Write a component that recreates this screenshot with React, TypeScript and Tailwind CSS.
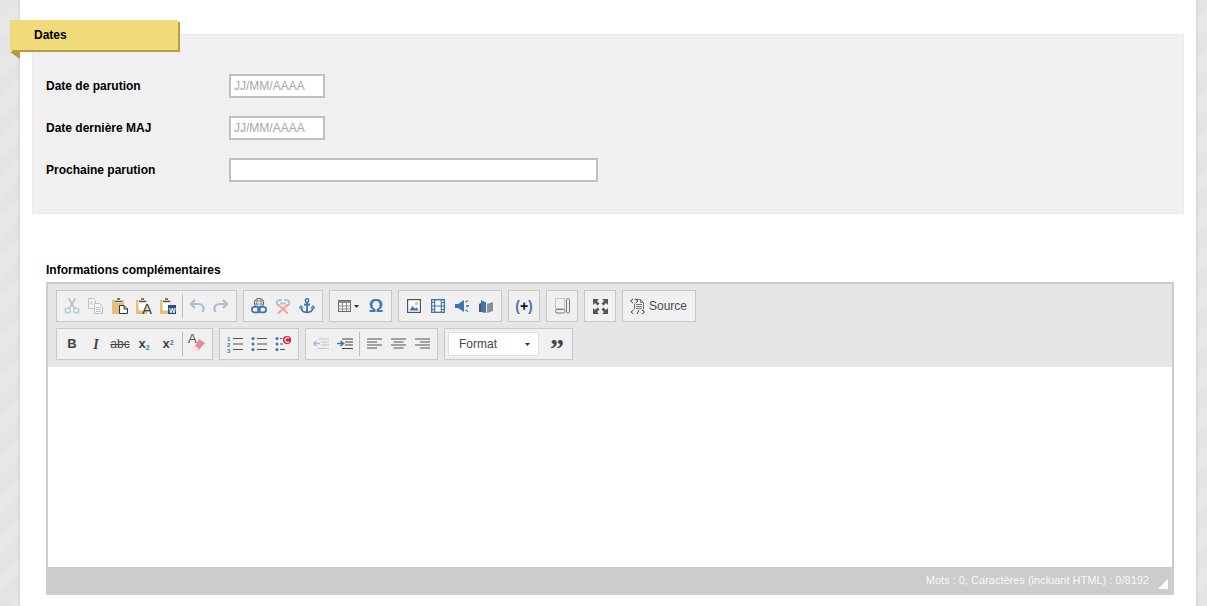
import type { ReactNode } from 'react';

const BLUE = '#3f75ab';

function Svg({ children, w = 16, h = 16 }: { children: ReactNode; w?: number; h?: number }) {
  return (
    <svg width={w} height={h} viewBox={`0 0 ${w} ${h}`} fill="none" className="block">
      {children}
    </svg>
  );
}

function Btn({ children, disabled = false }: { children: ReactNode; disabled?: boolean }) {
  return (
    <span className={`w-6 h-7 flex items-center justify-center ${disabled ? 'opacity-40' : ''}`}>{children}</span>
  );
}

function Sep() {
  return <span className="w-px h-6 bg-[#bcbcbc] mx-[2px]" />;
}

function Group({ children, className = '' }: { children: ReactNode; className?: string }) {
  return (
    <div className={`h-8 flex items-center px-[3px] bg-[#f0f0f0] border border-[#c9c9c9] ${className}`}>{children}</div>
  );
}

const Cut = () => (
  <Svg>
    <path d="M4.500 0l6 10M11.500 0l-6 10" stroke="#777" strokeWidth="1.600" />
    <circle cx="3.700" cy="12.500" r="2.500" stroke={BLUE} strokeWidth="1.200" />
    <circle cx="12.300" cy="12.500" r="2.500" stroke={BLUE} strokeWidth="1.200" />
  </Svg>
);

const Copy = () => (
  <Svg>
    <path d="M.5 .5h5l2 2v8h-7z" fill="#fff" stroke="#777" />
    <path d="M6.500 5.500h5l3 3v7h-8z" fill="#fff" stroke="#777" />
    <path d="M2 4h3M2 6h3M8 9.500h5M8 11.500h5M8 13.500h5" stroke="#888" />
  </Svg>
);

const Paste = () => (
  <Svg>
    <rect x="0" y="2" width="12" height="14" fill="#e8bd77" />
    <rect x="3" y="2" width="7" height="3" fill="#fff" />
    <path d="M3 3.500h7M5 1h3" stroke="#555" strokeWidth="1.300" />
    <path d="M7.500 7.500h4.500l3.500 3.500v4.500h-8z" fill="#fff" stroke="#333" />
    <path d="M12 7.500V11h3.500" stroke="#333" />
  </Svg>
);

const PasteText = () => (
  <span className="relative block w-4 h-4">
    <Svg>
      <rect x="0" y="2" width="11" height="14" fill="#e8bd77" />
      <rect x="2.500" y="2.500" width="8" height="10" fill="#fff" />
      <path d="M3 3.500h7M5 1h3" stroke="#555" strokeWidth="1.300" />
    </Svg>
    <span className="absolute left-[6px] top-[4px] text-[15px] leading-[14px] text-[#444] font-['Liberation_Sans',sans-serif]">
      A
    </span>
  </span>
);

const PasteWord = () => (
  <span className="relative block w-4 h-4">
    <Svg>
      <rect x="0" y="2" width="11" height="14" fill="#e8bd77" />
      <rect x="2.500" y="2.500" width="8" height="10" fill="#fff" />
      <path d="M3 3.500h7M5 1h3" stroke="#555" strokeWidth="1.300" />
      <rect x="8" y="7" width="8" height="9" fill="#1f4e8f" />
    </Svg>
    <span className="absolute left-[9px] top-[9px] text-[7px] leading-[7px] font-bold text-white font-['Liberation_Sans',sans-serif]">
      W
    </span>
  </span>
);

const Undo = () => (
  <Svg>
    <path d="M6 2L2 6l4 4" stroke={BLUE} strokeWidth="2.200" />
    <path d="M2.500 6h7c3 0 5 2 5 4.500 0 1.200-.4 2.300-1.200 3.500" stroke={BLUE} strokeWidth="2.200" />
  </Svg>
);

const Redo = () => (
  <Svg>
    <path d="M10 2l4 4-4 4" stroke={BLUE} strokeWidth="2.200" />
    <path d="M13.500 6h-7c-3 0-5 2-5 4.500 0 1.200.4 2.300 1.200 3.500" stroke={BLUE} strokeWidth="2.200" />
  </Svg>
);

const LinkIcon = () => (
  <Svg>
    <circle cx="8" cy="5" r="4.700" stroke="#555" />
    <ellipse cx="8" cy="5" rx="2.200" ry="4.700" stroke="#777" strokeWidth=".8" />
    <path d="M3.500 3h9M3.500 6h9" stroke="#777" strokeWidth=".8" />
    <rect x=".9" y="8.900" width="8" height="5.500" rx="2.700" fill="#f0f0f0" stroke={BLUE} strokeWidth="1.800" />
    <rect x="7.100" y="8.900" width="8" height="5.500" rx="2.700" stroke={BLUE} strokeWidth="1.800" />
  </Svg>
);

const Unlink = () => (
  <Svg>
    <path d="M7 2H4.500a2.700 2.700 0 0 0-1 5.200M9 2h2.500a2.700 2.700 0 0 1 1.500 5M5 5.500h6" stroke="#a9c3da" strokeWidth="1.900" />
    <path d="M3 6.500l10 9M13 6.500l-10 9" stroke="#e9a698" strokeWidth="2" />
  </Svg>
);

const Anchor = () => (
  <Svg>
    <circle cx="8" cy="2.500" r="1.700" stroke={BLUE} strokeWidth="1.400" />
    <path d="M8 4v11M5 6.500h6" stroke={BLUE} strokeWidth="1.800" />
    <path d="M2 9.500c.3 3 2.500 4.800 6 5 3.500-.2 5.700-2 6-5" stroke={BLUE} strokeWidth="1.700" />
    <path d="M0 10.500l2-2.500 2 2.500M12 10.500L14 8l2 2.500" stroke={BLUE} strokeWidth="1.100" />
  </Svg>
);

const TableIcon = () => (
  <span className="flex items-center gap-[3px]">
    <Svg w={13} h={12}>
      <rect x=".5" y=".5" width="12" height="11" fill="#fff" stroke="#666" />
      <path d="M0 1h13v2H0z" fill="#888" />
      <path d="M4.500 3v8M8.500 3v8M0 6h13M0 9h13" stroke="#888" />
    </Svg>
    <Svg w={5} h={3}>
      <path d="M0 0h5L2.500 3z" fill="#333" />
    </Svg>
  </span>
);

const ImageIcon = () => (
  <Svg w={14} h={14}>
    <rect x=".6" y=".6" width="12.800" height="12.800" fill="#fff" stroke="#555" strokeWidth="1.200" />
    <circle cx="9.500" cy="4.500" r="1.500" fill="#e8b66b" />
    <path d="M2.500 11.500l3-4.500 2.500 2.700L9.500 8.300l2.200 3.200z" fill={BLUE} />
  </Svg>
);

const Film = () => (
  <Svg w={14} h={14}>
    <rect x=".7" y=".7" width="12.600" height="12.600" fill="#fff" stroke={BLUE} strokeWidth="1.400" />
    <path d="M3.700 1v12M10.300 1v12M3.700 7h6.600M1 3.500h2.700M1 7h2.700M1 10.500h2.700M10.300 3.500H13M10.300 7H13M10.300 10.500H13" stroke={BLUE} strokeWidth="1.200" />
  </Svg>
);

const Audio = () => (
  <Svg w={15} h={14}>
    <path d="M0 5h3l6-4v12l-6-4H0z" fill={BLUE} />
    <path d="M10.500 3l2.500-1.500M11 7h3M10.500 11l2.500 1.500" stroke={BLUE} strokeWidth="1.300" />
  </Svg>
);

const Book = () => (
  <Svg w={15} h={14}>
    <path d="M0 5l2-1v9H0z" fill="#555" />
    <path d="M2 1l5 2.500V14l-5-1z" fill={BLUE} />
    <path d="M8 5l6-2v9l-6 2z" fill="#8a8f94" />
  </Svg>
);

const Blocks = () => (
  <Svg w={15} h={16}>
    <rect x=".5" y=".5" width="9" height="10" stroke="#999" strokeDasharray="1 1" />
    <rect x=".5" y="11.500" width="9.500" height="3.500" rx="1.500" stroke="#777" />
    <rect x="11.500" y=".5" width="3" height="14.500" rx="1.200" stroke="#777" />
  </Svg>
);

const Maximize = () => (
  <Svg w={15} h={15}>
    <path d="M0 0h6L4 2l2.500 2.500L4.500 6.500 2 4 0 6zM15 0v6l-2-2-2.500 2.500-2-2L11 2 9 0zM0 15V9l2 2 2.500-2.500 2 2L4 13l2 2zM15 15H9l2-2-2.500-2.500 2-2L13 11l2-2z" fill="#555" />
  </Svg>
);

const SourceIcon = () => (
  <Svg>
    <path d="M4.500 1.500h6l3 3v7" stroke="#777" />
    <path d="M4.500 5.500V11M13.500 12v.5" stroke="#777" />
    <path d="M10.500 1.500v3h3" stroke="#777" />
    <path d="M6 6.500h6M6 8.500h6M6 10.500h6" stroke="#777" />
    <path d="M3 1L.5 3 3 5M5.500 1L8 3 5.500 5" stroke="#444" />
    <path d="M3.500 12l-2.500 2 2.500 2M12 12l2.500 2-2.500 2M9 12l-2 4" stroke="#444" />
  </Svg>
);

const Eraser = () => (
  <span className="relative block w-4 h-4">
    <span className="absolute -left-[1px] -top-[4px] text-[13px] leading-[13px] text-[#555] font-['Liberation_Sans',sans-serif]">
      A
    </span>
    <span className="absolute inset-0">
      <Svg>
        <path d="M10 3l6 4-7 8-4-3z" fill="#e98a9b" />
        <path d="M3 10l2-1 5 4-1.500 2.500H5z" fill="#f8dfe3" />
      </Svg>
    </span>
  </span>
);

function ListLines({ x = 6 }: { x?: number }) {
  return <path d={`M${x} 2.500h10M${x} 8h10M${x} 13.500h10`} stroke="#555" strokeWidth="1.200" />;
}

const NumberedList = () => (
  <span className="relative block w-4 h-4">
    <Svg>
      <ListLines />
    </Svg>
    <span className="absolute left-0 top-0 flex h-4 flex-col justify-between text-[6px] leading-[6px] font-bold text-[#3f78b3] font-['Liberation_Sans',sans-serif]">
      <span>1</span>
      <span>2</span>
      <span>3</span>
    </span>
  </span>
);

const BulletList = () => (
  <Svg>
    <ListLines />
    <circle cx="2" cy="2.500" r="1.500" fill={BLUE} />
    <circle cx="2" cy="8" r="1.500" fill={BLUE} />
    <circle cx="2" cy="13.500" r="1.500" fill={BLUE} />
  </Svg>
);

const Scayt = () => (
  <Svg>
    <path d="M5 2.500h2M5 8h3M5 13.500h5" stroke="#555" strokeWidth="1.200" />
    <circle cx="2" cy="2.500" r="1.500" fill={BLUE} />
    <circle cx="2" cy="8" r="1.500" fill={BLUE} />
    <circle cx="2" cy="13.500" r="1.500" fill={BLUE} />
    <circle cx="12" cy="4" r="4" fill="#e3132c" />
    <path d="M14 2.400a2.300 2.300 0 1 0 0 3.200" stroke="#fff" strokeWidth="1.300" />
  </Svg>
);

const Outdent = ({ flip = false, muted = false }: { flip?: boolean; muted?: boolean }) => (
  <Svg w={16} h={12}>
    <path d="M5 1h11M8 4h8M8 7h8M5 10.500h11" stroke={muted ? '#888' : '#444'} />
    {flip ? (
      <path d="M0 5.500h6M3.500 3l3 2.500-3 2.500" stroke={BLUE} strokeWidth="1.600" />
    ) : (
      <path d="M7 5.500H1M3.500 3l-3 2.500 3 2.500" stroke={BLUE} strokeWidth="1.600" />
    )}
  </Svg>
);

function Align({ d }: { d: string }) {
  return (
    <Svg w={15} h={12}>
      <path d={d} stroke="#555" strokeWidth="1.100" />
    </Svg>
  );
}

const PlusBrackets = () => (
  <span className="text-[14px] leading-4 font-bold text-[#111] font-['Liberation_Sans',sans-serif] whitespace-nowrap">
    <span className="text-[#3f78b3]">(</span>+<span className="text-[#3f78b3]">)</span>
  </span>
);

const Quote = () => (
  <span className="block h-[14px] text-[28px] leading-[23px] font-bold text-[#444] font-['Liberation_Serif',serif]">”</span>
);

function Field({ label, value, wide = false }: { label: string; value?: string; wide?: boolean }) {
  return (
    <div className="flex items-center h-6">
      <label className="w-[183px] text-xs font-bold text-black">{label}</label>
      <input
        placeholder={value}
        readOnly
        className={`h-6 border-2 border-[#c0c0c0] bg-white px-[3px] text-xs outline-none placeholder:text-[#a8a8a8] ${
          wide ? 'w-[369px]' : 'w-24'
        }`}
      />
    </div>
  );
}

const stripes =
  'w-full bg-[repeating-linear-gradient(135deg,#e4e4e4_0px,#e4e4e4_14px,#e7e7e7_14px,#e7e7e7_28px)]';

export default function App() {
  return (
    <div className="flex h-[606px] w-full overflow-hidden bg-white font-['Liberation_Sans',Arial,sans-serif]">
      <div className="w-5 shrink-0 flex">
        <div className={`${stripes} shadow-[inset_-3px_0_3px_-2px_#d4d4d4]`} />
      </div>

      <main className="w-[1176px] shrink-0 bg-white px-3 pt-[34px]">
        {/* Dates */}
        <section className="relative h-[180px] border border-[#e8e8e8] bg-[#f0f0f0] pt-[39px] pl-[13px]">
          <div className="absolute -left-[23px] -top-[15px] h-[30px] w-[168px] bg-[#f0da7a] pl-6 text-xs font-bold leading-[30px] text-black shadow-[2px_2px_0_#b8a13c]">
            Dates
            <span className="absolute left-0 top-8 h-0 w-0 border-t-[7px] border-l-[10px] border-t-[#b09a3e] border-l-transparent" />
          </div>
          <div className="flex flex-col gap-[18px]">
            <Field label="Date de parution" value="JJ/MM/AAAA" />
            <Field label="Date dernière MAJ" value="JJ/MM/AAAA" />
            <Field label="Prochaine parution" wide />
          </div>
        </section>

        <h2 className="mt-[49px] pl-[14px] text-xs font-bold leading-[14px] text-black">Informations complémentaires</h2>

        {/* Editeur */}
        <div className="ml-[14px] mt-[5px] flex h-[313px] w-[1128px] flex-col border-x-2 border-t-2 border-[#ccc]">
          <div className="h-[83px] bg-[#e6e6e6] pl-2 pt-[6px]">
            <div className="flex gap-[6px]">
              <Group>
                <Btn disabled><Cut /></Btn>
                <Btn disabled><Copy /></Btn>
                <Btn><Paste /></Btn>
                <Btn><PasteText /></Btn>
                <Btn><PasteWord /></Btn>
                <Sep />
                <Btn disabled><Undo /></Btn>
                <Btn disabled><Redo /></Btn>
              </Group>
              <Group>
                <Btn><LinkIcon /></Btn>
                <Btn><Unlink /></Btn>
                <Btn><Anchor /></Btn>
              </Group>
              <Group>
                <span className="w-[31px] flex justify-center"><TableIcon /></span>
                <span className="w-6 text-center text-[18px] font-bold leading-5 text-[#3f78b3]">Ω</span>
              </Group>
              <Group>
                <Btn><ImageIcon /></Btn>
                <Btn><Film /></Btn>
                <Btn><Audio /></Btn>
                <Btn><Book /></Btn>
              </Group>
              <Group><Btn><PlusBrackets /></Btn></Group>
              <Group><Btn><Blocks /></Btn></Group>
              <Group><Btn><Maximize /></Btn></Group>
              <Group className="pl-[7px] gap-[3px] w-[74px]">
                <SourceIcon />
                <span className="text-xs text-[#474f58]">Source</span>
              </Group>
            </div>
            <div className="mt-[6px] flex gap-[6px]">
              <Group>
                <Btn><span className="text-[13px] font-bold text-[#444]">B</span></Btn>
                <Btn><span className="text-[14px] font-bold italic text-[#444] font-['Liberation_Serif',serif]">I</span></Btn>
                <Btn><span className="text-[12px] text-[#444] line-through">abc</span></Btn>
                <Btn>
                  <span className="text-[13px] font-bold text-[#444]">
                    x<sub className="text-[7px] text-[#3f78b3]">2</sub>
                  </span>
                </Btn>
                <Btn>
                  <span className="text-[13px] font-bold text-[#444]">
                    x<sup className="text-[7px] text-[#3f78b3]">2</sup>
                  </span>
                </Btn>
                <Sep />
                <Btn><Eraser /></Btn>
              </Group>
              <Group>
                <Btn><NumberedList /></Btn>
                <Btn><BulletList /></Btn>
                <Btn><Scayt /></Btn>
              </Group>
              <Group>
                <Btn disabled><Outdent muted /></Btn>
                <Btn><Outdent flip /></Btn>
                <Sep />
                <Btn><Align d="M0 1h15M0 4h10M0 7h15M0 10h10" /></Btn>
                <Btn><Align d="M0 1h15M2.500 4h10M0 7h15M2.500 10h10" /></Btn>
                <Btn><Align d="M0 1h15M5 4h10M0 7h15M5 10h10" /></Btn>
              </Group>
              <Group>
                <div className="flex h-6 w-[91px] items-center justify-between border border-[#e0e0e0] bg-white pl-[10px] pr-2 text-xs text-[#484848]">
                  <span>Format</span>
                  <Svg w={5} h={3}>
                    <path d="M0 0h5L2.500 3z" fill="#333" />
                  </Svg>
                </div>
                <span className="w-[30px] flex justify-end">
                  <span className="w-6 flex justify-center"><Quote /></span>
                </span>
              </Group>
            </div>
          </div>

          <div className="h-[200px] bg-white" />

          <div className="relative -mx-[2px] flex h-[28px] items-center justify-end bg-[#ccc] pb-[2px] pr-[25px] text-[11px] text-[#f8f8f8]">
            Mots : 0, Caractères (incluant HTML) : 0/8192
            <span className="absolute bottom-[6px] right-[6px] h-0 w-0 border-b-[10px] border-l-[10px] border-b-white border-l-transparent" />
          </div>
        </div>
      </main>

      <div className="w-[11px] shrink-0 flex">
        <div className={`${stripes} shadow-[inset_3px_0_3px_-2px_#d4d4d4]`} />
      </div>
    </div>
  );
}
